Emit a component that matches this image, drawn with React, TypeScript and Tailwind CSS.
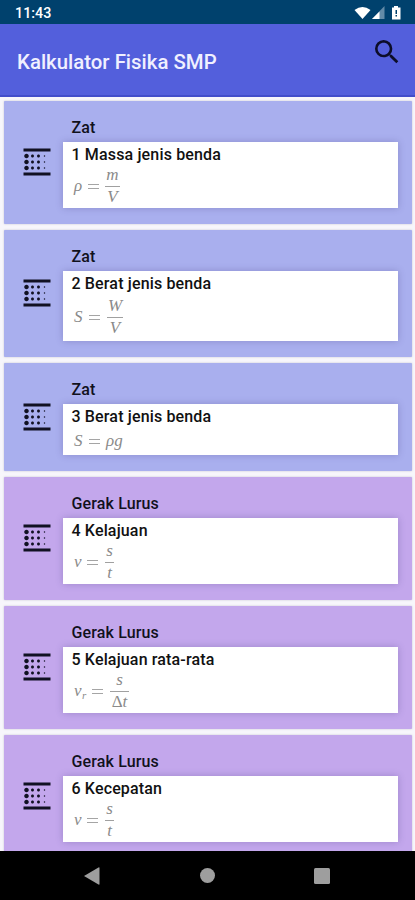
import { MdBlurLinear, MdSearch } from "react-icons/md";

type Formula = {
  left: string;
  sub?: string;
  top?: string;
  bottom?: string;
  flat?: string;
  barClass: string;
  eqClass: string;
};

type Item = {
  group: string;
  title: string;
  formula: Formula;
  cardClass: string;
  boxClass: string;
};

const items: Item[] = [
  {
    group: "Zat",
    title: "1 Massa jenis benda",
    formula: { left: "ρ", top: "m", bottom: "V", eqClass: "ml-[5px]", barClass: "ml-[6px] w-[15px]" },
    cardClass: "bg-[#a9afee] h-[123px]",
    boxClass: "h-[66px]",
  },
  {
    group: "Zat",
    title: "2 Berat jenis benda",
    formula: { left: "S", top: "W", bottom: "V", eqClass: "ml-[6px]", barClass: "ml-[7px] w-[16px]" },
    cardClass: "bg-[#a9afee] h-[127px]",
    boxClass: "h-[70px]",
  },
  {
    group: "Zat",
    title: "3 Berat jenis benda",
    formula: { left: "S", flat: "ρg", eqClass: "ml-[6px]", barClass: "" },
    cardClass: "bg-[#a9afee] h-[108px]",
    boxClass: "h-[51px]",
  },
  {
    group: "Gerak Lurus",
    title: "4 Kelajuan",
    formula: { left: "v", top: "s", bottom: "t", eqClass: "ml-[4px]", barClass: "ml-[7px] w-[9px]" },
    cardClass: "bg-[#c3a7ec] h-[123px]",
    boxClass: "h-[66px]",
  },
  {
    group: "Gerak Lurus",
    title: "5 Kelajuan rata-rata",
    formula: { left: "v", sub: "r", top: "s", bottom: "Δt", eqClass: "ml-[4px]", barClass: "ml-[7px] w-[19px]" },
    cardClass: "bg-[#c3a7ec] h-[123px]",
    boxClass: "h-[66px]",
  },
  {
    group: "Gerak Lurus",
    title: "6 Kecepatan",
    formula: { left: "v", top: "s", bottom: "t", eqClass: "ml-[4px]", barClass: "ml-[7px] w-[9px]" },
    cardClass: "bg-[#c3a7ec] h-[123px]",
    boxClass: "h-[66px]",
  },
];

function Variable({ children }: { children: string }) {
  if (children.startsWith("Δ")) {
    return (
      <span>
        <span className="not-italic">Δ</span>
        {children.slice(1)}
      </span>
    );
  }
  return <span>{children}</span>;
}

function Expression({ formula }: { formula: Formula }) {
  return (
    <div className="flex flex-1 items-center pl-[11px] font-['Liberation_Serif',serif] text-[17px] leading-[16px] text-[#8a8a8a] italic">
      <span className="flex w-[9px] items-baseline">{formula.left}</span>
      {formula.sub && <span className="mt-[7px] -ml-px w-[6px] text-[11px] leading-[10px]">{formula.sub}</span>}
      <span className={`flex w-[11px] flex-col gap-[3px] pt-px ${formula.eqClass}`}>
        <span className="h-px bg-[#a5a5a5]" />
        <span className="h-px bg-[#a5a5a5]" />
      </span>
      {formula.flat ? (
        <span className="ml-[6px]">{formula.flat}</span>
      ) : (
        <span className={`-mt-px flex flex-col items-center ${formula.barClass}`}>
          <Variable>{formula.top ?? ""}</Variable>
          <span className="mt-[3px] mb-[2px] h-px w-full bg-[#a0a0a0]" />
          <Variable>{formula.bottom ?? ""}</Variable>
        </span>
      )}
    </div>
  );
}

function Card({ item }: { item: Item }) {
  return (
    <section
      className={`flex w-[408px] shrink-0 items-center rounded-[1px] pl-[15px] shadow-[0_0_2px_rgba(90,90,110,0.35)] ${item.cardClass}`}
    >
      <MdBlurLinear className="size-[36px] shrink-0 text-[#111122]" />
      <div className="ml-[8px] flex h-full w-[335px] flex-col">
        <h2 className="h-[41.5px] shrink-0 pt-[17px] pl-[8.5px] text-[16px] leading-[20px] font-medium tracking-[0.15px] text-[#11111c]">
          {item.group}
        </h2>
        <div className={`flex shrink-0 flex-col bg-white shadow-[0_0_7px_rgba(60,50,120,0.28)] ${item.boxClass}`}>
          <h3 className="-mb-px shrink-0 pt-[3px] pl-[8.5px] text-[16px] leading-[20px] font-medium tracking-[0.15px] text-[#111]">
            {item.title}
          </h3>
          <Expression formula={item.formula} />
        </div>
      </div>
    </section>
  );
}

export default function App() {
  return (
    <div className="flex h-[900px] w-[415px] flex-col overflow-hidden bg-[#f7f6fb] font-[Roboto,sans-serif]">
      <div className="flex h-[24px] shrink-0 items-center bg-[#00416d] pr-[13px] pl-[15px] text-white">
        <span className="mt-px text-[14.3px] leading-[16px] font-medium">11:43</span>
        <svg className="mt-px ml-auto h-[14px] w-[48px]" viewBox="0 0 48 14">
          <path d="M.5 4Q8.5-2 16.5 4L8.5 13Z" fill="#fff" />
          <path d="M30.500 0V13H18Z" fill="#638ba8" />
          <path d="M25.500 5.500V13H18Z" fill="#fff" />
          <path d="M40 1.500V0H44V1.500H46.500V13.500H38V1.500Z" fill="#fff" />
          <path d="M42.250 4V8M42.250 9V10.500" stroke="#00416d" strokeWidth="1.500" />
        </svg>
      </div>
      <header className="flex h-[73px] shrink-0 items-start justify-between border-b-2 border-[#424dca] bg-[#535fdc] pr-[12px] pl-[17px]">
        <h1 className="pt-[26px] text-[20.4px] leading-[24px] font-medium text-[#f0f0ff]">Kalkulator Fisika SMP</h1>
        <MdSearch className="mt-[12px] size-[32px] text-[#0c0d29]" />
      </header>
      <main className="flex min-h-0 flex-1 flex-col gap-[6px] overflow-hidden pt-[3.5px] pl-[4px]">
        {items.map((item) => (
          <Card key={item.title} item={item} />
        ))}
      </main>
      <nav className="flex h-[49px] shrink-0 items-center bg-black">
        <svg className="ml-[84px] h-[18px] w-[16px]" viewBox="0 0 16 18" fill="#9e9e9e">
          <path d="M0 9 14.500 .5Q15.500 0 15.500 1V17Q15.500 18 14.500 17.500Z" />
        </svg>
        <span className="ml-[100px] size-[15px] rounded-full bg-[#9e9e9e]" />
        <span className="ml-[99px] size-[16px] rounded-[1.500px] bg-[#9e9e9e]" />
      </nav>
    </div>
  );
}
